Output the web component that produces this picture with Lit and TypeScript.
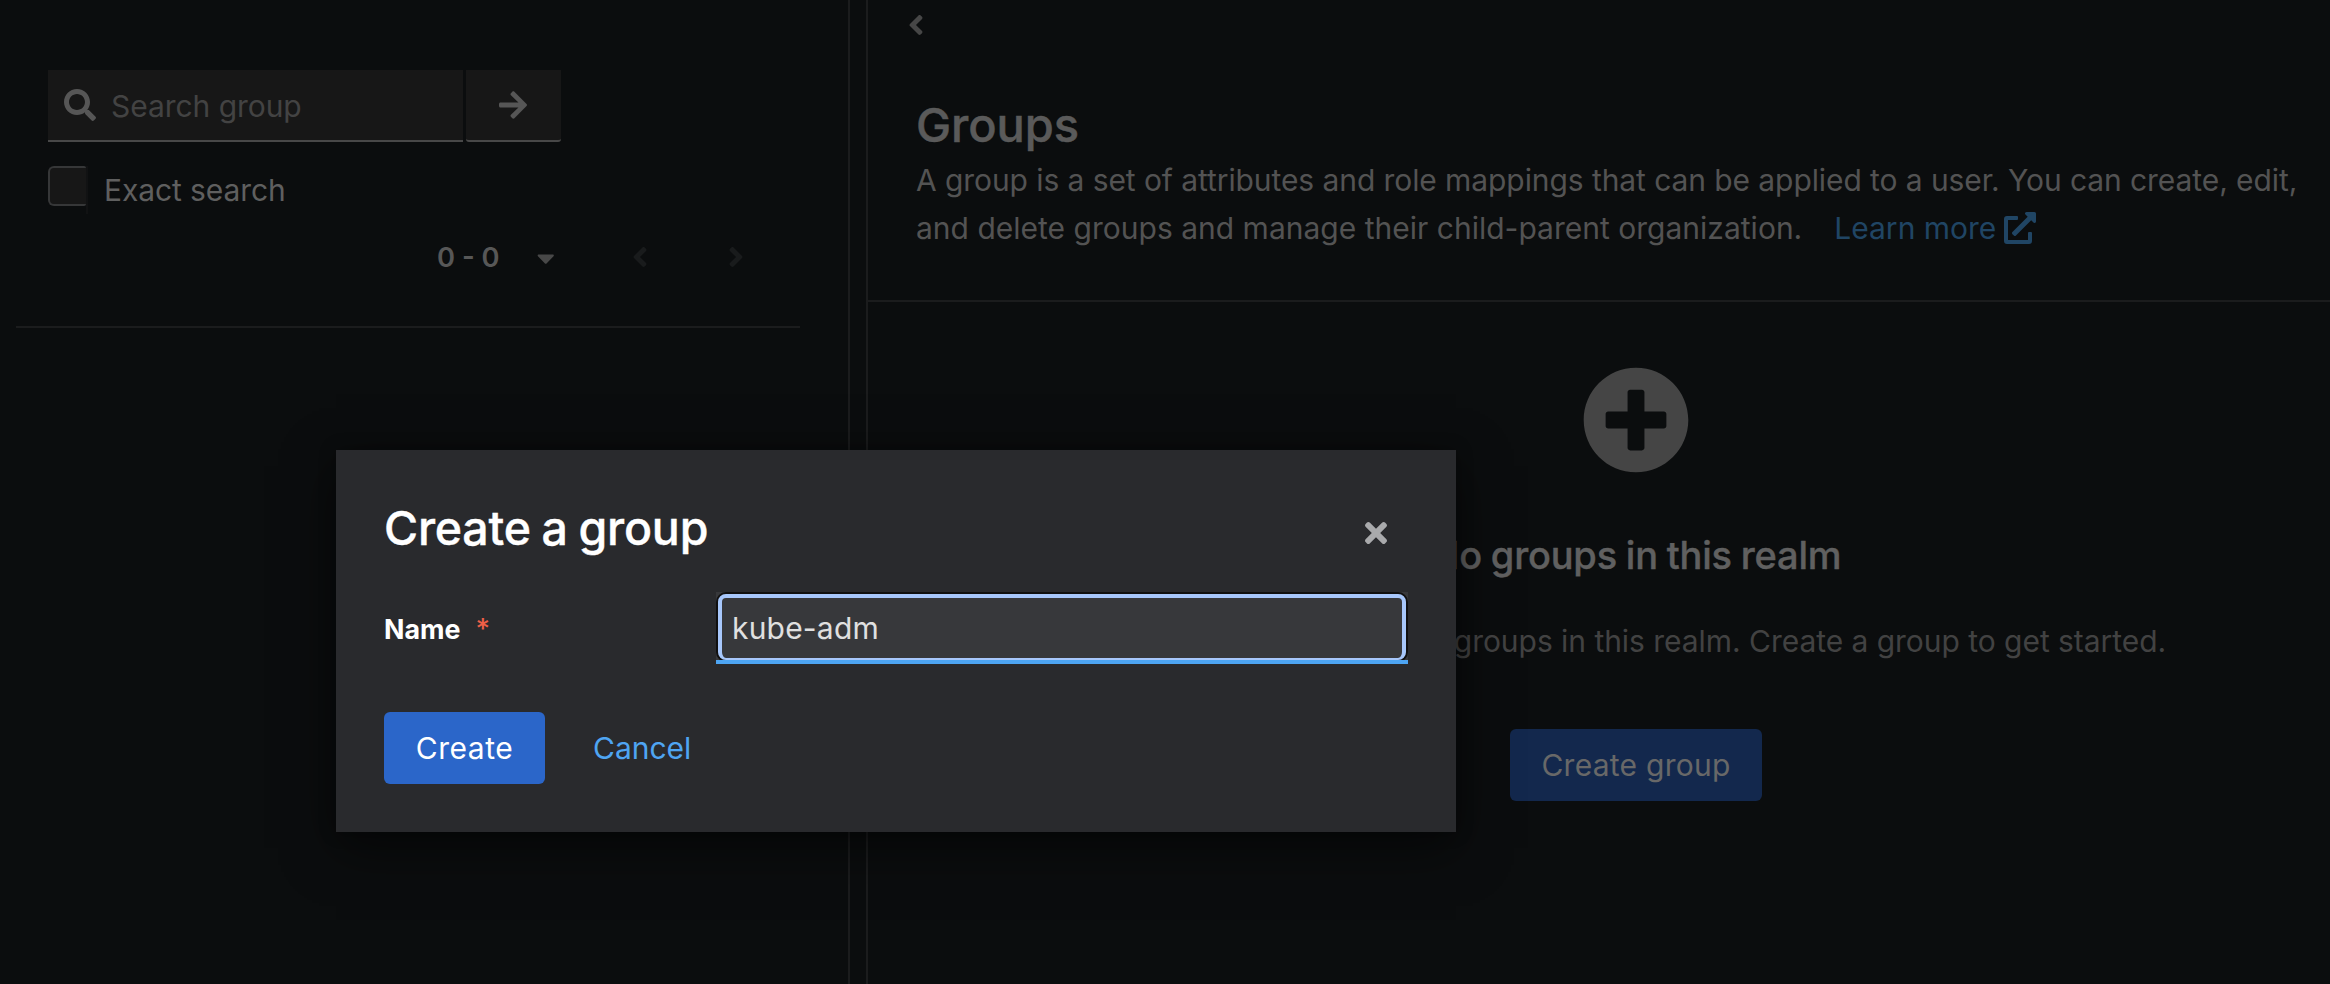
import { LitElement, html, css, svg } from "lit";
import { customElement, property } from "lit/decorators.js";

const ICONS: Record<string, [number, string]> = {
  search: [512, "M505 442.7L405.3 343c-4.5-4.5-10.6-7-17-7H372c27.6-35.3 44-79.7 44-128C416 93.1 322.9 0 208 0S0 93.1 0 208s93.1 208 208 208c48.3 0 92.7-16.4 128-44v16.3c0 6.4 2.5 12.5 7 17l99.7 99.7c9.4 9.4 24.6 9.4 33.9 0l28.3-28.3c9.4-9.4 9.4-24.6.1-34zM208 336c-70.7 0-128-57.2-128-128 0-70.7 57.2-128 128-128 70.7 0 128 57.2 128 128 0 70.7-57.2 128-128 128z"],
  arrow: [448, "M190.5 66.9l22.2-22.2c9.4-9.4 24.6-9.4 33.9 0L441 239c9.4 9.4 9.4 24.6 0 33.9L246.6 467.3c-9.4 9.4-24.6 9.4-33.9 0l-22.2-22.2c-9.5-9.5-9.3-25 .4-34.3L311.4 296H24c-13.3 0-24-10.7-24-24v-32c0-13.3 10.7-24 24-24h287.4L190.9 101.2c-9.8-9.3-10-24.8-.4-34.3z"],
  angleLeft: [256, "M31.7 239l136-136c9.4-9.4 24.6-9.4 33.9 0l22.6 22.6c9.4 9.4 9.4 24.6 0 33.9L127.9 256l96.4 96.4c9.4 9.4 9.4 24.6 0 33.9L201.7 409c-9.4 9.4-24.6 9.4-33.9 0l-136-136c-9.5-9.4-9.5-24.6-.1-34z"],
  angleRight: [256, "M224.3 273l-136 136c-9.4 9.4-24.6 9.4-33.9 0l-22.6-22.6c-9.4-9.4-9.4-24.6 0-33.9l96.4-96.4-96.4-96.4c-9.4-9.4-9.4-24.6 0-33.9L54.3 103c9.4-9.4 24.6-9.4 33.9 0l136 136c9.5 9.4 9.5 24.6.1 34z"],
  caret: [320, "M31.3 192h257.3c17.8 0 26.7 21.5 14.1 34.1L174.1 354.7c-7.8 7.8-20.5 7.8-28.3 0L17.2 226.1C4.6 213.5 13.5 192 31.3 192z"],
  plus: [512, "M256 8C119 8 8 119 8 256s111 248 248 248 248-111 248-248S393 8 256 8zm144 276c0 6.6-5.4 12-12 12h-92v92c0 6.6-5.4 12-12 12h-56c-6.6 0-12-5.4-12-12v-92h-92c-6.6 0-12-5.4-12-12v-56c0-6.6 5.4-12 12-12h92v-92c0-6.6 5.4-12 12-12h56c6.6 0 12 5.4 12 12v92h92c6.6 0 12 5.4 12 12v56z"],
  times: [352, "M242.72 256l100.07-100.07c12.28-12.28 12.28-32.19 0-44.48l-22.24-22.24c-12.28-12.28-32.19-12.28-44.48 0L176 189.28 75.93 89.21c-12.28-12.28-32.19-12.28-44.48 0L9.21 111.45c-12.28 12.28-12.28 32.19 0 44.48L109.28 256 9.21 356.07c-12.28 12.28-12.28 32.19 0 44.48l22.24 22.24c12.28 12.28 32.2 12.28 44.48 0L176 322.72l100.07 100.07c12.28 12.28 32.2 12.28 44.48 0l22.24-22.24c12.28-12.28 12.28-32.19 0-44.48L242.72 256z"],
  external: [512, "M432,320H400a16,16,0,0,0-16,16V448H64V128H208a16,16,0,0,0,16-16V80a16,16,0,0,0-16-16H48A48,48,0,0,0,0,112V464a48,48,0,0,0,48,48H400a48,48,0,0,0,48-48V336A16,16,0,0,0,432,320ZM488,0h-128c-21.37,0-32.05,25.91-17,41l35.73,35.73L135,320.37a24,24,0,0,0,0,34L157.67,377a24,24,0,0,0,34,0L435.28,133.32,471,169c15,15,41,4.5,41-17V24A24,24,0,0,0,488,0Z"],
};

@customElement("kc-icon")
class KcIcon extends LitElement {
  @property() name = "search";
  static styles = css`
    :host { display: inline-flex; flex: none; height: 32px; }
    svg { height: 100%; width: auto; fill: currentColor; display: block; }
  `;
  render() {
    const [w, d] = ICONS[this.name];
    return html`<svg viewBox="0 0 ${w} 512">${svg`<path d=${d}></path>`}</svg>`;
  }
}

@customElement("create-group-modal")
class CreateGroupModal extends LitElement {
  static styles = css`
    :host {
      display: flex; flex-direction: column; box-sizing: border-box;
      width: 1120px; height: 382px; padding: 48px; background: #292a2d; color: #fff;
      font: 30px/48px Inter, sans-serif;
      box-shadow: 0 16px 48px rgba(0, 0, 0, .5), 0 0 16px rgba(0, 0, 0, .3);
    }
    .head { display: flex; height: 64px; justify-content: space-between; align-items: center; padding-right: 21px; }
    h1 { margin: -4px 0 0; font-size: 46.5px; line-height: 62px; font-weight: 500; letter-spacing: -.2px; word-spacing: -1.5px; -webkit-text-stroke: .4px currentColor; }
    .close { color: #a9aaac; margin-top: 6px; }
    .row { display: grid; grid-template-columns: 332px 692px; height: 72px; margin-top: 30px; }
    .label { font-size: 26.8px; font-weight: 700; line-height: 48px; padding: 13px 0 0 0; }
    .star { color: #ee5f47; font-size: 28px; line-height: 1; font-weight: 500; margin-left: 15px; }
    .field { box-sizing: border-box; height: 72px; background: #37383b; border-bottom: 4px solid #4da5f3; display: flex; }
    .ring {
      flex: 1; border: 4px solid #a7c7fb; border-bottom-width: 2px; border-radius: 8px; margin: 2px 2px 0;
      box-shadow: 0 0 0 2px #101010; clip-path: inset(-2px -2px 0 -2px);
      padding: 0 10px; line-height: 61px; color: #e0e0e0; letter-spacing: .2px;
    }
    .actions { display: flex; align-items: center; margin-top: 48px; gap: 48px; }
    .primary { box-sizing: border-box; width: 161px; text-align: center; background: #2b66c9; line-height: 72px; height: 72px; border-radius: 6px; letter-spacing: .5px; }
    .cancel { color: #4fa5f2; }
  `;
  render() {
    return html`
      <div class="head"><h1>Create a group</h1><kc-icon class="close" name="times"></kc-icon></div>
      <div class="row">
        <div class="label">Name<span class="star">*</span></div>
        <div class="field"><div class="ring">kube-adm</div></div>
      </div>
      <div class="actions"><div class="primary">Create</div><div class="cancel">Cancel</div></div>
    `;
  }
}

@customElement("app-root")
class AppRoot extends LitElement {
  static styles = css`
    :host {
      display: flex; position: relative; box-sizing: border-box; width: 2330px; height: 984px; overflow: hidden;
      background: #0b0d0e; color: #535353; font: 30px/48px Inter, sans-serif;
    }
    * { box-sizing: border-box; }
    .side { width: 850px; flex: none; border-right: 2px solid #1b1c1d; padding-top: 70px; }
    .search { display: flex; height: 73px; margin-left: 48px; gap: 3px; }
    .search > div { background: #171717; border-bottom: 2px solid #484848; height: 72px; display: flex; align-items: center; }
    .input { width: 415px; padding: 0 0 0 16px; gap: 15px; color: #434343; }
    .input span { letter-spacing: -.05px; padding-top: 2px; }
    .input kc-icon, .go kc-icon { color: #565656; }
    .search .go { width: 95px; justify-content: center; border-radius: 0 0 3px 3px; padding-right: 1px; }
    .exact { display: flex; margin: 23px 0 0 48px; gap: 16px; color: #5f5f5f; letter-spacing: -.1px; }
    .box { display: flex; width: 40px; height: 48px; border-right: 2px solid #111213; }
    .check { width: 38px; height: 40px; background: #171717; border: 2px solid #363738; border-right: 0; border-radius: 6px 2px 2px 6px; }
    .pager { display: flex; height: 42px; margin: 23px 0 0 437px; font-size: 27.3px; line-height: 42px; font-weight: 600; color: #575757; }
    .count { width: 100px; }
    .caret { height: 28px; margin-top: 6.5px; color: #484848; }
    .prev { margin: 4px 0 0 77px; color: #191b1c; }
    .next { margin: 4px 0 0 80px; color: #191b1c; }
    .rule { height: 2px; margin: 47px 48px 0 16px; background: #1b1c1d; }
    .main { flex: 1; margin-left: 16px; border-left: 2px solid #1b1c1d; }
    .back { display: flex; padding: 9px 0 0 40px; color: #464646; }
    .head { height: 261px; padding: 51px 0 0 48px; border-bottom: 2px solid #1b1c1d; }
    h1 { margin: 0; font-size: 47px; line-height: 66px; font-weight: 500; color: #5a5a5a; letter-spacing: -.1px; -webkit-text-stroke: .5px currentColor; }
    .text { line-height: 48px; white-space: nowrap; margin-top: -2px; }
    .l1 { letter-spacing: -.08px; }
    .l2 { display: flex; letter-spacing: .01px; }
    .learn { display: flex; align-items: center; gap: 8px; margin-left: 32px; color: #204564; letter-spacing: 0; }
    .empty { display: flex; flex-direction: column; align-items: center; padding: 64px 0 0 74px; }
    .empty kc-icon { height: 108px; color: #454545; }
    h2 { margin: 49px 0 0; font-size: 38px; line-height: 64px; font-weight: 500; color: #606060; letter-spacing: -.2px; word-spacing: -1px; -webkit-text-stroke: .4px currentColor; }
    .body { margin-top: 30px; color: #424242; letter-spacing: -.04px; padding-right: 2px; }
    .create { width: 252px; height: 72px; line-height: 72px; margin-top: 64px; text-align: center; border-radius: 6px; background: #13284d; color: #686868; letter-spacing: .25px; }
    .modal { position: absolute; left: 336px; top: 450px; }
  `;
  render() {
    return html`
      <div class="side">
        <div class="search">
          <div class="input"><kc-icon name="search"></kc-icon><span>Search group</span></div>
          <div class="go"><kc-icon name="arrow"></kc-icon></div>
        </div>
        <div class="exact"><div class="box"><div class="check"></div></div><span>Exact search</span></div>
        <div class="pager">
          <span class="count">0 - 0</span>
          <kc-icon class="caret" name="caret"></kc-icon>
          <kc-icon class="prev" name="angleLeft"></kc-icon>
          <kc-icon class="next" name="angleRight"></kc-icon>
        </div>
        <div class="rule"></div>
      </div>
      <div class="main">
        <div class="back"><kc-icon name="angleLeft"></kc-icon></div>
        <div class="head">
          <h1>Groups</h1>
          <div class="text">
            <div class="l1">A group is a set of attributes and role mappings that can be applied to a user. You can create, edit,</div>
            <div class="l2">and delete groups and manage their child-parent organization.
              <span class="learn">Learn more <kc-icon name="external"></kc-icon></span></div>
          </div>
        </div>
        <div class="empty">
          <kc-icon name="plus"></kc-icon>
          <h2>No groups in this realm</h2>
          <div class="body">You haven't created any groups in this realm. Create a group to get started.</div>
          <div class="create">Create group</div>
        </div>
      </div>
      <create-group-modal class="modal"></create-group-modal>
    `;
  }
}
